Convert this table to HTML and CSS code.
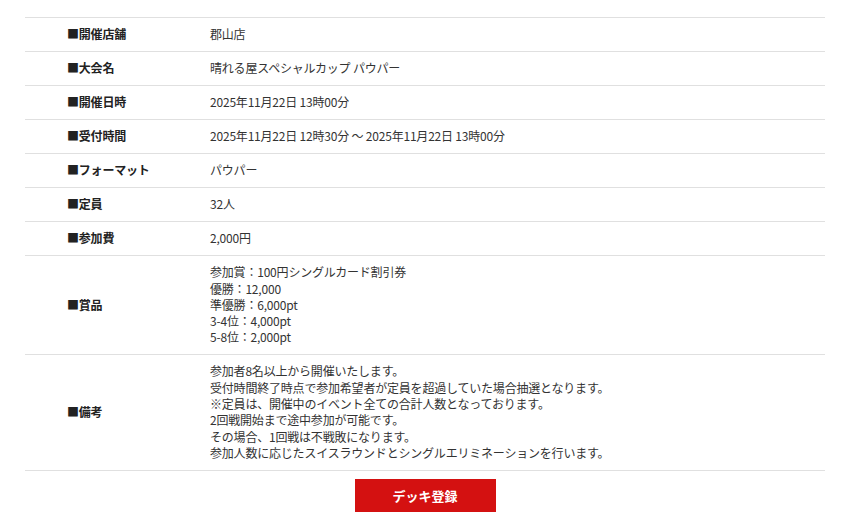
FILE: index.html
```html
<!DOCTYPE html>
<html lang="ja">
<head>
  <meta charset="UTF-8">
  <meta name="viewport" content="width=device-width, initial-scale=1.0">
  <title>大会詳細</title>
  <link rel="stylesheet" href="styles.css">
</head>
<body>

  <!-- Event detail table -->
  <div class="event-detail">
    <table class="detail-table">
      <tr>
        <th>■開催店舗</th>
        <td>郡山店</td>
      </tr>
      <tr>
        <th>■大会名</th>
        <td>晴れる屋スペシャルカップ パウパー</td>
      </tr>
      <tr>
        <th>■開催日時</th>
        <td>2025年11月22日 13時00分</td>
      </tr>
      <tr>
        <th>■受付時間</th>
        <td>2025年11月22日 12時30分 〜 2025年11月22日 13時00分</td>
      </tr>
      <tr>
        <th>■フォーマット</th>
        <td>パウパー</td>
      </tr>
      <tr>
        <th>■定員</th>
        <td>32人</td>
      </tr>
      <tr>
        <th>■参加費</th>
        <td>2,000円</td>
      </tr>
      <tr>
        <th>■賞品</th>
        <td>
          参加賞：100円シングルカード割引券<br>
          優勝：12,000<br>
          準優勝：6,000pt<br>
          3-4位：4,000pt<br>
          5-8位：2,000pt
        </td>
      </tr>
      <tr>
        <th>■備考</th>
        <td>
          参加者8名以上から開催いたします。<br>
          受付時間終了時点で参加希望者が定員を超過していた場合抽選となります。<br>
          ※定員は、開催中のイベント全ての合計人数となっております。<br>
          2回戦開始まで途中参加が可能です。<br>
          その場合、1回戦は不戦敗になります。<br>
          参加人数に応じたスイスラウンドとシングルエリミネーションを行います。
        </td>
      </tr>
    </table>

    <div class="button-row">
      <a class="deck-button" href="#">デッキ登録</a>
    </div>
  </div>

</body>
</html>
```

FILE: styles.css
```css
/* Basic Styling */
body {
  margin: 0;
  background-color: #fff;
  font-family: 'Noto Sans CJK JP', sans-serif;
  color: #333;
}

/* Container */
.event-detail {
  margin: 17px 32px 0 25px;
}

/* Table */
.detail-table {
  width: 100%;
  border-collapse: collapse;
  border-top: 1px solid #e0e0e0;
  font-size: 12px;
  line-height: 16.3px;
  letter-spacing: -0.2px;
}

.detail-table tr {
  border-bottom: 1px solid #e0e0e0;
}

.detail-table th {
  width: 143px;
  padding: 8.35px 0 8.35px 42px;
  text-align: left;
  font-weight: bold;
  color: #222;
  vertical-align: middle;
}

.detail-table td {
  padding: 8.35px 0;
  color: #333;
}

/* Button */
.button-row {
  display: flex;
  justify-content: center;
  padding-top: 8px;
}

.deck-button {
  display: flex;
  align-items: center;
  justify-content: center;
  width: 141px;
  height: 33px;
  background-color: #d41111;
  color: #fff;
  font-size: 13px;
  font-weight: bold;
  text-decoration: none;
}
```
